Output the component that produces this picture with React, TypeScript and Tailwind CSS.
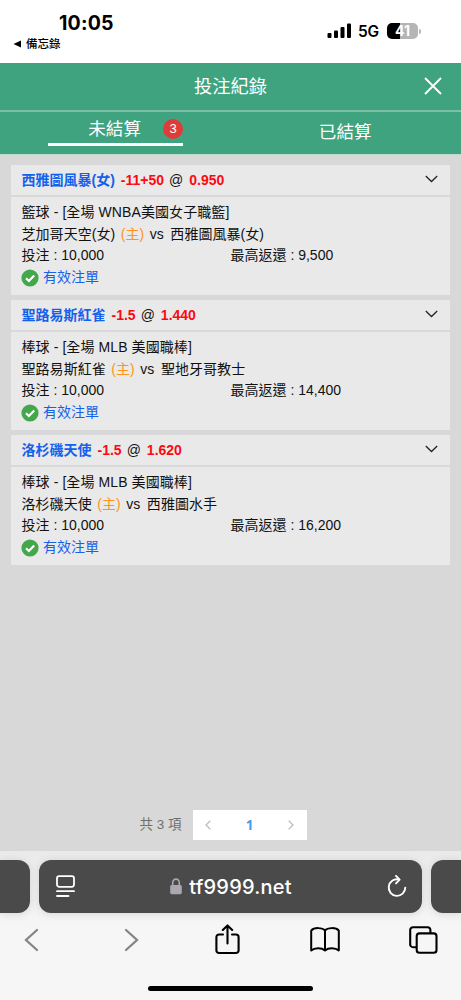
import React from 'react';

interface Bet {
  team: string;
  handicap: string;
  odds: string;
  league: string;
  home: string;
  away: string;
  stake: string;
  payout: string;
}

const bets: Bet[] = [
  {
    team: '西雅圖風暴(女)',
    handicap: '-11+50',
    odds: '0.950',
    league: '籃球 - [全場 WNBA美國女子職籃]',
    home: '芝加哥天空(女)',
    away: '西雅圖風暴(女)',
    stake: '10,000',
    payout: '9,500',
  },
  {
    team: '聖路易斯紅雀',
    handicap: '-1.5',
    odds: '1.440',
    league: '棒球 - [全場 MLB 美國職棒]',
    home: '聖路易斯紅雀',
    away: '聖地牙哥教士',
    stake: '10,000',
    payout: '14,400',
  },
  {
    team: '洛杉磯天使',
    handicap: '-1.5',
    odds: '1.620',
    league: '棒球 - [全場 MLB 美國職棒]',
    home: '洛杉磯天使',
    away: '西雅圖水手',
    stake: '10,000',
    payout: '16,200',
  },
];

function StatusBar() {
  return (
    <div className="h-[63px] bg-white flex justify-between text-black font-['Inter','Noto_Sans_CJK_TC',sans-serif]">
      <div className="pt-[12px] pl-[13px]">
        <div className="pl-[46px] h-[23px] leading-[23px] text-[19.5px] tracking-[0.2px] font-bold">10:05</div>
        <div className="flex items-center gap-[5px] h-[18px]">
          <svg width="8" height="8" viewBox="0 0 8 8">
            <path d="M0.5 4 L8 0.4 V7.6 Z" fill="currentColor" />
          </svg>
          <span className="text-[11.5px] leading-[18px] font-medium">備忘錄</span>
        </div>
      </div>
      <div className="flex items-start pt-[22px] pr-[40px]">
        <svg className="mt-[1px]" width="25" height="16" viewBox="0 0 25 16" fill="currentColor">
          <rect x="0.5" y="10" width="4" height="5" rx="1" />
          <rect x="7" y="7.5" width="4" height="7.5" rx="1" />
          <rect x="13.5" y="4" width="4" height="11" rx="1" />
          <rect x="20" y="0.5" width="4" height="14.5" rx="1" />
        </svg>
        <span className="ml-[6px] w-[23px] text-[15.5px] leading-[20px] font-semibold tracking-[-0.2px]">5G</span>
        {/* Battery */}
        <div className="ml-[6px] mt-[1px] flex items-center">
          <div className="w-[31px] h-[16px] rounded-[5px] bg-gradient-to-r from-black from-[41%] to-[#b5b5b5] to-[41%] text-white text-[14px] leading-[16px] font-bold text-center">
            41
          </div>
          <div className="ml-px w-[2px] h-[5px] rounded-r-full bg-[#b5b5b5]" />
        </div>
      </div>
    </div>
  );
}

function BetCard({ bet }: { bet: Bet }) {
  return (
    <div className="h-[130px] bg-[#e9e9e9] text-[14px] text-[#111]">
      {/* Title */}
      <div className="h-[32px] border-b-2 border-[#d9d9d9] pl-[10.5px] pr-[12px] flex items-center justify-between">
        <div className="font-bold leading-[20px] whitespace-pre">
          <span className="text-[#1461eb]">{bet.team}</span>
          <span className="ml-[6px] text-[#fb0a12]">{bet.handicap}</span>
          <span className="ml-[5px] mr-[6px] font-medium">@</span>
          <span className="text-[#fb0a12]">{bet.odds}</span>
        </div>
        <svg className="mb-[3px]" width="13" height="8" viewBox="0 0 13 8" fill="none" stroke="#222" strokeWidth="1.3">
          <path d="M0.8 1 L6.5 6.5 L12.2 1" />
        </svg>
      </div>

      {/* Details */}
      <div className="pl-[10.5px] pt-[5px] leading-[21.5px]">
        <div className="tracking-[0.09px]">{bet.league}</div>
        <div className="flex tracking-[0.05px]">
          <span>{bet.home}</span>
          <span className="ml-[5.5px] text-[#ff9418]">(主)</span>
          <span className="ml-[5.5px]">vs</span>
          <span className="ml-[6.5px]">{bet.away}</span>
        </div>
        <div className="flex">
          <span className="w-[209px]">投注 : {bet.stake}</span>
          <span>最高返還 : {bet.payout}</span>
        </div>
        <div className="-ml-[0.5px] flex items-center gap-[4px] h-[23px] text-[#1461eb]">
          <svg width="18" height="18" viewBox="0 0 18 18">
            <circle cx="9" cy="9" r="8.6" fill="#45a74b" />
            <path d="M5 9.2 L7.9 12 L13.2 6.5" fill="none" stroke="#fff" strokeWidth="2.1" />
          </svg>
          <span>有效注單</span>
        </div>
      </div>
    </div>
  );
}

function Pagination() {
  return (
    <div className="flex items-center justify-center gap-[11px] h-[30px] pr-[15px] text-[13.5px] text-[#707070]">
      <span>共 3 項</span>
      <div className="w-[114px] h-[30px] bg-white px-[12px] flex items-center justify-between">
        <svg width="6" height="10" viewBox="0 0 6 10" fill="none" stroke="#bdbdbd" strokeWidth="1.3">
          <path d="M5.3 0.7 L1 5 L5.3 9.3" />
        </svg>
        <span className="text-[#409eea] font-bold font-['Open_Sans',sans-serif]">1</span>
        <svg width="6" height="10" viewBox="0 0 6 10" fill="none" stroke="#bdbdbd" strokeWidth="1.3">
          <path d="M0.7 0.7 L5 5 L0.7 9.3" />
        </svg>
      </div>
    </div>
  );
}

function BrowserBar() {
  return (
    <div className="h-[149px] bg-gradient-to-b from-[#eaeaea] to-[#f6f6f6] to-[50%] pt-[9px]">
      {/* Address bar */}
      <div className="flex justify-between h-[53px]">
        <div className="w-[30px] rounded-r-[12px] bg-[#4a4a4a] shadow-[0_1px_8px_rgba(0,0,0,0.12)]" />
        <div className="w-[383px] rounded-[12px] bg-[#4a4a4a] shadow-[0_1px_8px_rgba(0,0,0,0.12)] flex items-center justify-between pl-[17px] pr-[15px] text-white">
          <svg width="19" height="23" viewBox="0 0 19 23" fill="none" stroke="currentColor" strokeWidth="1.8" strokeLinecap="round">
            <rect x="1" y="1.2" width="17" height="10.6" rx="2.2" />
            <path d="M1 16.2 H18 M1 21 H12.5" />
          </svg>
          <div className="flex items-center gap-[7px]">
            <svg width="12" height="17" viewBox="0 0 12 17">
              <path d="M2.7 8 V4.6 A3.3 3.5 0 0 1 9.3 4.6 V8" fill="none" stroke="#aaa7b0" strokeWidth="1.6" />
              <rect x="0.2" y="7" width="11.6" height="9.2" rx="1.6" fill="#aaa7b0" />
            </svg>
            <span className="text-[20px] leading-[24px] tracking-[0.2px] font-medium font-['Inter',sans-serif]">tf9999.net</span>
          </div>
          <svg width="20" height="23" viewBox="0 0 20 23" fill="none" stroke="currentColor" strokeWidth="1.9" strokeLinecap="round" strokeLinejoin="round">
            <path d="M11.6 4.4 A8.3 8.3 0 1 0 18.3 12.6" />
            <path d="M9 0.9 L12.6 4.6 L9 8.3" />
          </svg>
        </div>
        <div className="w-[30px] rounded-l-[12px] bg-[#4a4a4a] shadow-[0_1px_8px_rgba(0,0,0,0.12)]" />
      </div>

      {/* Toolbar */}
      <div className="grid grid-cols-5 items-center justify-items-center -ml-[18px] w-[490px] h-[53px] text-black">
        <svg width="15" height="24" viewBox="0 0 15 24" fill="none" stroke="#858585" strokeWidth="2.3" strokeLinecap="round">
          <path d="M13 2 L2 12 L13 22" />
        </svg>
        <svg className="ml-[5px]" width="15" height="24" viewBox="0 0 15 24" fill="none" stroke="#858585" strokeWidth="2.3" strokeLinecap="round">
          <path d="M2 2 L13 12 L2 22" />
        </svg>
        <svg className="ml-px" width="25" height="31" viewBox="0 0 25 31" fill="none" stroke="currentColor" strokeWidth="2.1" strokeLinecap="round" strokeLinejoin="round">
          <path d="M8 10.5 H4 A2.6 2.6 0 0 0 1.4 13.1 V26.4 A2.6 2.6 0 0 0 4 29 H21 A2.6 2.6 0 0 0 23.6 26.4 V13.1 A2.6 2.6 0 0 0 21 10.5 H17" />
          <path d="M12.5 19.5 V1.6 M7.8 6 L12.5 1.4 L17.2 6" />
        </svg>
        <svg width="30" height="25" viewBox="0 0 30 25" fill="none" stroke="currentColor" strokeWidth="2" strokeLinejoin="round">
          <path d="M15 3.6 C12.5 0.4 4 0.2 1.2 3.6 V23.4 C4.5 20.6 11.5 20.4 15 23.4 C18.5 20.4 25.5 20.6 28.8 23.4 V3.6 C26 0.2 17.5 0.4 15 3.6 V23.4" />
        </svg>
        <svg width="29" height="28" viewBox="0 0 29 28" fill="none" stroke="currentColor" strokeWidth="2.1">
          <path d="M7.5 21.2 H4 A2.8 2.8 0 0 1 1.2 18.4 V4 A2.8 2.8 0 0 1 4 1.2 H18.6 A2.8 2.8 0 0 1 21.4 4 V7.2" />
          <rect x="7.7" y="7.4" width="19.8" height="19.4" rx="2.8" />
        </svg>
      </div>
      <div className="mx-auto mt-[19.5px] w-[165px] h-[5px] rounded-full bg-black" />
    </div>
  );
}

export default function App() {
  return (
    <div className="w-full h-[1000px] overflow-hidden flex flex-col bg-[#d8d8d8] font-['Liberation_Sans','Noto_Sans_CJK_TC',sans-serif]">
      <StatusBar />

      {/* Header */}
      <div className="h-[49px] bg-[#40a380] border-b-2 border-[#7bbfa6] grid grid-cols-[1fr_auto_1fr] items-center text-white">
        <span />
        <h1 className="text-[18.3px] leading-[26px] font-normal">投注紀錄</h1>
        <svg className="justify-self-end mr-[19px] mb-[2px]" width="18" height="18" viewBox="0 0 18 18" fill="none" stroke="currentColor" strokeWidth="1.8">
          <path d="M1 1 L17 17 M17 1 L1 17" />
        </svg>
      </div>

      {/* Tabs */}
      <div className="h-[43px] shrink-0 bg-[#40a380] border-b border-[#b9dccf] grid grid-cols-2 text-white text-[17.6px] leading-[26px] font-normal">
        <div className="ml-[48px] w-[135px] h-[34px] border-b-[3px] border-white flex items-center justify-end gap-[22px] pt-[2px]">
          <span>未結算</span>
          <span className="size-[20px] rounded-full bg-[#df3b39] text-[13px] leading-[20px] text-center">3</span>
        </div>
        <div className="text-center pt-[7px] pr-px">
          <span>已結算</span>
        </div>
      </div>

      {/* Bets */}
      <div className="flex-1 flex flex-col gap-[5px] pt-[10px] pl-[11px] pr-[11px]">
        {bets.map((bet) => (
          <BetCard key={bet.team} bet={bet} />
        ))}
      </div>

      <div className="pb-[11px]">
        <Pagination />
      </div>
      <BrowserBar />
    </div>
  );
}
